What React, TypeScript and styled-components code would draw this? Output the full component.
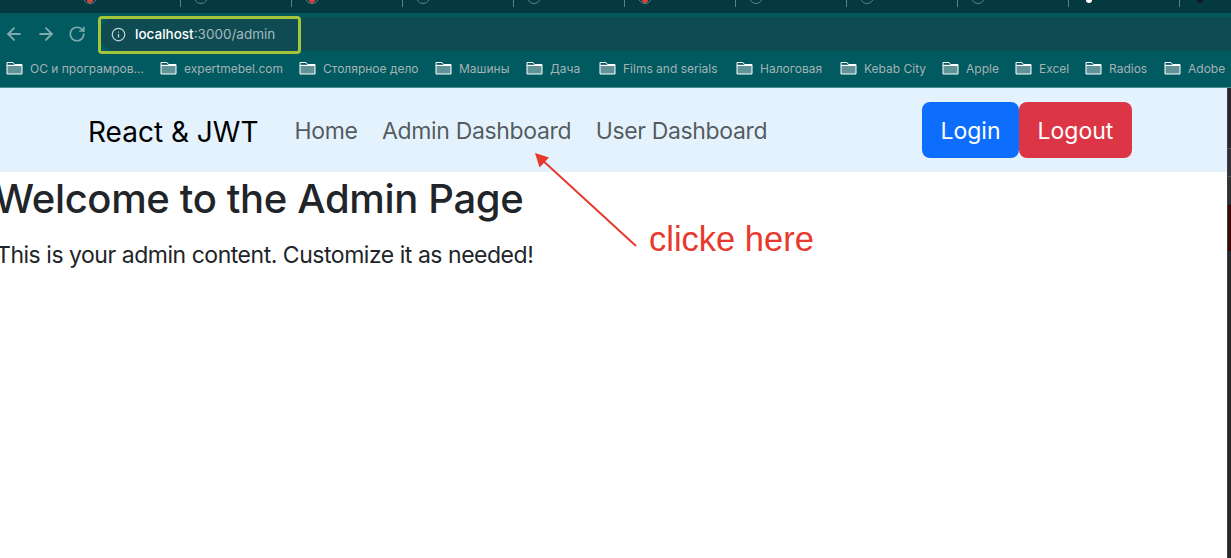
import { ArrowLeft, ArrowRight, Info, RotateCw } from 'lucide-react';
import styled, { createGlobalStyle } from 'styled-components';

type TabKind = 'plain' | 'alert' | 'light' | 'dark';

const TABS: TabKind[] = ['alert', 'plain', 'alert', 'plain', 'plain', 'alert', 'plain', 'plain', 'plain', 'light', 'dark'];
const BOOKMARKS = [
  { label: 'ОС и програмров…', width: 154 },
  { label: 'expertmebel.com', width: 139 },
  { label: 'Столярное дело', width: 136 },
  { label: 'Машины', width: 91 },
  { label: 'Дача', width: 73 },
  { label: 'Films and serials', width: 137 },
  { label: 'Налоговая', width: 104 },
  { label: 'Kebab City', width: 102 },
  { label: 'Apple', width: 73 },
  { label: 'Excel', width: 70 },
  { label: 'Radios', width: 79 },
  { label: 'Adobe', width: 70 },
];

const FolderIcon = () => (
  <svg width="17" height="14" viewBox="0 0 17 14">
    <path d="M1 3.5h15v9.5H1z" fill="#5f9398" />
    <path d="M1 13V1.5h6l1.5 2H16V13zM1 4.5h15" fill="none" stroke="#fff" strokeWidth="1" />
  </svg>
);

const App = () => {
  return (
    <St.Screen>
      <GlobalStyle />
      <St.TabStrip>
        {TABS.map((kind, i) => (
          <St.Tab key={i}>
            <St.Favicon $kind={kind} />
          </St.Tab>
        ))}
      </St.TabStrip>

      <St.Toolbar>
        <St.NavIcons>
          <ArrowLeft size={20} strokeWidth={2.3} />
          <ArrowRight size={20} strokeWidth={2.3} />
          <RotateCw size={18} strokeWidth={2.3} />
        </St.NavIcons>
        <St.Omnibox>
          <Info size={15} color="#c4d2d4" />
          <St.Url>
            <strong>localhost</strong>:3000/admin
          </St.Url>
        </St.Omnibox>
      </St.Toolbar>

      <St.BookmarksBar>
        {BOOKMARKS.map(({ label, width }) => (
          <St.Bookmark key={label} $width={width}>
            <FolderIcon />
            <span>{label}</span>
          </St.Bookmark>
        ))}
      </St.BookmarksBar>

      <St.Viewport>
        <St.Page>
          <St.Navbar>
            <St.Brand>React &amp; JWT</St.Brand>
            <St.NavLinks>
              <St.NavLink>Home</St.NavLink>
              <St.NavLink>Admin Dashboard</St.NavLink>
              <St.NavLink>User Dashboard</St.NavLink>
            </St.NavLinks>
            <St.Actions>
              <St.Button $color="#0d6efd" $width={97}>Login</St.Button>
              <St.Button $color="#dc3545" $width={113}>Logout</St.Button>
            </St.Actions>
          </St.Navbar>
          <St.Content>
            <St.Heading>Welcome to the Admin Page</St.Heading>
            <St.Lead>This is your admin content. Customize it as needed!</St.Lead>
          </St.Content>
        </St.Page>
        <St.Scrollbar>
          <St.ScrollMark />
          <St.ScrollMark />
          <St.ScrollThumb />
        </St.Scrollbar>
      </St.Viewport>

      {/* пометки поверх скриншота */}
      <St.UrlHighlight />
      <St.ArrowMark width="112" height="102" viewBox="0 0 112 102">
        <path d="M106 97 L10 9" fill="none" stroke="#e8392e" strokeWidth="2" />
        <path d="M5 4 L19 8.5 L9.5 18.5 Z" fill="#e8392e" />
      </St.ArrowMark>
      <St.Note>clicke here</St.Note>
    </St.Screen>
  );
};

export default App;

const GlobalStyle = createGlobalStyle`
  html, body {
    margin: 0;
    padding: 0;
    overflow: hidden;
    background: #fff;
  }
`;

const faviconBorder = { plain: '#5f8286', alert: '#5f8286', light: 'transparent', dark: 'transparent' };
const faviconDot = { plain: 'transparent', alert: '#d8433a', light: '#fff', dark: '#14161c' };

const St = {
  Screen: styled.div`
    position: relative;
    display: flex;
    flex-direction: column;
    width: 1231px;
    height: 558px;
    overflow: hidden;
    font-family: Inter, 'Noto Sans', sans-serif;
  `,

  TabStrip: styled.div`
    display: flex;
    flex: none;
    height: 13px;
    padding-left: 70px;
    background: #03393f;
  `,

  Tab: styled.div`
    position: relative;
    flex: none;
    box-sizing: border-box;
    width: 111px;
    height: 7px;
    border-right: 1px solid #5d8185;
  `,

  Favicon: styled.i<{ $kind: TabKind }>`
    position: absolute;
    top: -10px;
    left: 13px;
    box-sizing: border-box;
    width: 14px;
    height: 14px;
    border: 1px solid ${({ $kind }) => faviconBorder[$kind]};
    border-radius: 50%;

    &::after {
      content: '';
      position: absolute;
      left: 3px;
      bottom: 0;
      width: 6px;
      height: 3px;
      border-radius: 0 0 3px 3px;
      background: ${({ $kind }) => faviconDot[$kind]};
    }
  `,

  Toolbar: styled.div`
    display: flex;
    flex: none;
    align-items: center;
    box-sizing: border-box;
    height: 38px;
    padding-top: 4px;
    background: #005a60;
  `,

  NavIcons: styled.div`
    display: flex;
    flex: none;
    align-items: center;
    gap: 12px;
    width: 100px;
    padding-left: 4px;
    box-sizing: border-box;
    color: #7fa9ac;
  `,

  Omnibox: styled.div`
    display: flex;
    flex: 1;
    align-items: center;
    gap: 9px;
    height: 34px;
    padding-left: 11px;
    border-radius: 17px 0 0 17px;
    background: #0f4b53;
  `,

  Url: styled.div`
    color: #a3babd;
    font-size: 13.5px;

    & > strong {
      color: #fff;
      font-weight: 500;
    }
  `,

  BookmarksBar: styled.div`
    display: flex;
    flex: none;
    align-items: center;
    height: 37px;
    padding: 0 0 2px 6px;
    border-bottom: 1px solid #4d8a8e;
    box-sizing: border-box;
    background: #005a60;
    overflow: hidden;
  `,

  Bookmark: styled.div<{ $width: number }>`
    display: flex;
    flex: none;
    align-items: center;
    gap: 7px;
    width: ${({ $width }) => $width}px;
    color: #a5b2b5;
    font-size: 12px;
    white-space: nowrap;
  `,

  Viewport: styled.div`
    display: flex;
    flex: 1;
    min-height: 0;
  `,

  Page: styled.main`
    flex: 1;
    min-width: 0;
    background: #fff;
  `,

  Navbar: styled.nav`
    display: flex;
    align-items: center;
    box-sizing: border-box;
    height: 84px;
    padding: 0 95px 0 88px;
    background: #e3f2fd;
  `,

  Brand: styled.div`
    color: #000;
    font-size: 28px;
    line-height: 1;
    margin-top: 3px;
  `,

  NavLinks: styled.div`
    display: flex;
    flex: 1;
    gap: 24.5px;
    margin: 2px 0 0 36px;
  `,

  NavLink: styled.a`
    color: rgba(0, 0, 0, 0.65);
    font-size: 23px;
    letter-spacing: -0.35px;
    line-height: 1;
  `,

  Actions: styled.div`
    display: flex;
    flex: none;
    margin-top: -1px;
  `,

  Button: styled.button<{ $color: string; $width: number }>`
    width: ${({ $width }) => $width}px;
    height: 56px;
    padding: 2px 0 0;
    border: 0;
    border-radius: 8px;
    background: ${({ $color }) => $color};
    color: #fff;
    font: 400 23px Inter, sans-serif;
  `,

  Content: styled.section`
    margin-left: -4px;
  `,

  Heading: styled.h1`
    margin: 4px 0 0 -2px;
    color: #212529;
    font-size: 40px;
    font-weight: 500;
    letter-spacing: -0.35px;
    line-height: 45px;
    white-space: nowrap;
  `,

  Lead: styled.p`
    margin: 17px 0 0;
    color: #212529;
    font-size: 23px;
    letter-spacing: -0.47px;
    line-height: 34px;
    white-space: nowrap;
  `,

  Scrollbar: styled.aside`
    display: flex;
    flex: none;
    flex-direction: column;
    box-sizing: border-box;
    width: 4px;
    padding-top: 60px;
    border-left: 1px solid #3c3d41;
    background: #26282c;
  `,

  ScrollMark: styled.div`
    flex: none;
    height: 27px;
    border-top: 1px solid #55575b;
    background: #2e3034;
  `,

  ScrollThumb: styled.div`
    flex: none;
    height: 46px;
    margin-top: 1px;
    background: #3f0606;
  `,

  UrlHighlight: styled.div`
    position: absolute;
    top: 16px;
    left: 98px;
    box-sizing: border-box;
    width: 203px;
    height: 38px;
    border: 3px solid #a2c53c;
    border-radius: 4px;
  `,

  ArrowMark: styled.svg`
    position: absolute;
    top: 149px;
    left: 530px;
  `,

  Note: styled.div`
    position: absolute;
    top: 219px;
    left: 649px;
    color: #e8392e;
    font-family: 'Liberation Sans', Arial, sans-serif;
    font-size: 34.5px;
    line-height: 40px;
    white-space: nowrap;
  `,
};
